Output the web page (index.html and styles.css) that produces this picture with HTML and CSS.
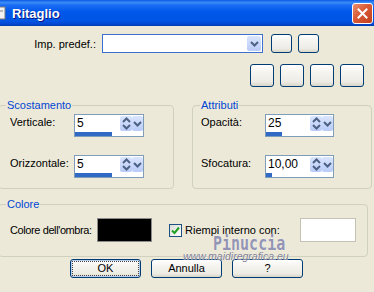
FILE: index.html
```html
<!DOCTYPE html>
<html lang="it">
<head>
<meta charset="utf-8">
<title>Ritaglio</title>
<link rel="stylesheet" href="styles.css">
</head>
<body>
<div class="window">
  <div class="titlebar">
    <svg class="appicon" width="7" height="14" viewBox="0 0 7 14"><rect x="-6" y="1" width="11" height="12" fill="#f2f2f2" stroke="#7a7a7a"/><rect x="-4" y="4" width="7" height="2" fill="#b8b8b8"/></svg>
    <span class="title">Ritaglio</span>
    <span class="close"><svg width="11" height="11" viewBox="0 0 11 11"><path d="M1.5 1.5 L9.5 9.5 M9.5 1.5 L1.5 9.5" stroke="#fff" stroke-width="2" stroke-linecap="square"/></svg></span>
  </div>
  <div class="body">
    <div class="preset-row">
      <span class="preset-label">Imp. predef.:</span>
      <div class="combo"><span class="combo-btn"><svg width="9" height="6" viewBox="0 0 9 6"><path d="M1 1 L4.5 4.5 L8 1" fill="none" stroke="#4d6185" stroke-width="2"/></svg></span></div>
      <button class="xbtn small"></button>
      <button class="xbtn small"></button>
    </div>
    <div class="tool-row">
      <button class="xbtn tool"></button>
      <button class="xbtn tool"></button>
      <button class="xbtn tool"></button>
      <button class="xbtn tool"></button>
    </div>
    <div class="groups">
      <fieldset class="group g-offset">
        <legend>Scostamento</legend>
        <div class="field-row">
          <span class="flabel">Verticale:</span>
          <div class="spin"><div class="spin-top"><span class="val">5</span><span class="updown"><svg width="9" height="13" viewBox="0 0 9 13"><path d="M1 5 L4.5 1.5 L8 5 M1 8 L4.5 11.5 L8 8" fill="none" stroke="#4d6185" stroke-width="2"/></svg></span><span class="drop"><svg width="9" height="6" viewBox="0 0 9 6"><path d="M1 1 L4.5 4.5 L8 1" fill="none" stroke="#4d6185" stroke-width="2"/></svg></span></div><div class="bar"><div class="fill" style="width:37px"></div></div></div>
        </div>
        <div class="field-row">
          <span class="flabel">Orizzontale:</span>
          <div class="spin"><div class="spin-top"><span class="val">5</span><span class="updown"><svg width="9" height="13" viewBox="0 0 9 13"><path d="M1 5 L4.5 1.5 L8 5 M1 8 L4.5 11.5 L8 8" fill="none" stroke="#4d6185" stroke-width="2"/></svg></span><span class="drop"><svg width="9" height="6" viewBox="0 0 9 6"><path d="M1 1 L4.5 4.5 L8 1" fill="none" stroke="#4d6185" stroke-width="2"/></svg></span></div><div class="bar"><div class="fill" style="width:37px"></div></div></div>
        </div>
      </fieldset>
      <fieldset class="group g-attr">
        <legend>Attributi</legend>
        <div class="field-row">
          <span class="flabel">Opacità:</span>
          <div class="spin"><div class="spin-top"><span class="val">25</span><span class="updown"><svg width="9" height="13" viewBox="0 0 9 13"><path d="M1 5 L4.5 1.5 L8 5 M1 8 L4.5 11.5 L8 8" fill="none" stroke="#4d6185" stroke-width="2"/></svg></span><span class="drop"><svg width="9" height="6" viewBox="0 0 9 6"><path d="M1 1 L4.5 4.5 L8 1" fill="none" stroke="#4d6185" stroke-width="2"/></svg></span></div><div class="bar"><div class="fill" style="width:16px"></div></div></div>
        </div>
        <div class="field-row">
          <span class="flabel">Sfocatura:</span>
          <div class="spin"><div class="spin-top"><span class="val">10,00</span><span class="updown"><svg width="9" height="13" viewBox="0 0 9 13"><path d="M1 5 L4.5 1.5 L8 5 M1 8 L4.5 11.5 L8 8" fill="none" stroke="#4d6185" stroke-width="2"/></svg></span><span class="drop"><svg width="9" height="6" viewBox="0 0 9 6"><path d="M1 1 L4.5 4.5 L8 1" fill="none" stroke="#4d6185" stroke-width="2"/></svg></span></div><div class="bar"><div class="fill" style="width:6px"></div></div></div>
        </div>
      </fieldset>
    </div>
    <fieldset class="group g-color">
      <legend>Colore</legend>
      <div class="color-row">
        <span class="clabel">Colore dell'ombra:</span>
        <span class="swatch black"></span>
        <span class="check"><svg width="9" height="9" viewBox="0 0 9 9"><path d="M1 4.5 L3.5 7 L8 1.5" fill="none" stroke="#21a121" stroke-width="2"/></svg></span>
        <span class="checklabel">Riempi interno con:</span>
        <span class="swatch white"></span>
      </div>
    </fieldset>
    <div class="actions">
      <button class="xbtn action default"><span class="focus">OK</span></button>
      <button class="xbtn action">Annulla</button>
      <button class="xbtn action">?</button>
    </div>
  </div>
  <div class="wm-name">Pinuccia</div>
  <div class="wm-url">www.maidiregrafica.eu</div>
</div>
</body>
</html>
```
FILE: styles.css
```css
html, body {
  margin: 0;
  padding: 0;
}
body {
  width: 374px;
  height: 292px;
  overflow: hidden;
  background: #ece9d8;
  font-family: "Liberation Sans", Arial, sans-serif;
  font-size: 11px;
  color: #000;
}
.window {
  position: relative;
  width: 374px;
  height: 292px;
  overflow: hidden;
  background: #ece9d8;
}
.titlebar {
  height: 26px;
  display: flex;
  align-items: center;
  background: linear-gradient(to bottom, #0a5ae6 0%, #3a8cf8 10%, #1a6cf4 20%, #0058ea 45%, #0055e4 80%, #0048d2 92%, #003bb0 100%);
}
.appicon {
  display: block;
  margin-left: 0;
}
.title {
  margin-left: 5px;
  color: #fff;
  font-weight: bold;
  font-size: 13px;
  text-shadow: 1px 1px 0 #0a1883;
}
.close {
  margin-left: auto;
  margin-right: 1px;
  width: 21px;
  height: 21px;
  box-sizing: border-box;
  border: 1px solid #fff;
  border-radius: 3px;
  background: linear-gradient(135deg, #eb8e6e 0%, #d95a35 45%, #c2401c 100%);
  display: flex;
  align-items: center;
  justify-content: center;
}
.close svg { display: block; }
.body {
  display: flex;
  flex-direction: column;
}
.preset-row {
  margin-top: 8px;
  height: 19px;
  display: flex;
  align-items: center;
}
.preset-label {
  width: 66px;
  margin-left: 30px;
  text-align: right;
  white-space: nowrap;
}
.combo {
  margin-left: 6px;
  width: 161px;
  height: 19px;
  box-sizing: border-box;
  border: 1px solid #3d6fcf;
  background: #fff;
  display: flex;
  justify-content: flex-end;
  align-items: center;
  padding-right: 1px;
}
.combo-btn {
  width: 14px;
  height: 15px;
  border-radius: 2px;
  background: linear-gradient(to bottom, #dae5fd, #b9cbf7);
  display: flex;
  align-items: center;
  justify-content: center;
}
.xbtn {
  box-sizing: border-box;
  border: 1px solid #003c74;
  border-radius: 3px;
  background: linear-gradient(to bottom, #ffffff 0%, #f6f5f1 30%, #ecebe4 80%, #d9d5c8 100%);
  padding: 0;
  margin: 0;
  font-family: "Liberation Sans", Arial, sans-serif;
  font-size: 11px;
  color: #000;
}
.small {
  width: 21px;
  height: 19px;
  margin-left: 6px;
}
.combo + .small {
  margin-left: 8px;
}
.tool-row {
  margin-top: 11px;
  display: flex;
  gap: 6px;
  padding-left: 250px;
}
.tool {
  width: 24px;
  height: 23px;
}
.groups {
  margin-top: 11px;
  display: flex;
  gap: 18px;
  margin-left: -2px;
}
.group {
  box-sizing: border-box;
  margin: 0;
  min-width: 0;
  border: 1px solid #d0d0bf;
  border-radius: 4px;
}
.group legend {
  color: #0046d5;
  line-height: 14px;
  padding: 0 1px;
}
.g-offset {
  width: 176px;
  padding: 2px 0 10px 11px;
}
.g-offset legend { margin-left: -4px; }
.g-attr {
  width: 180px;
  padding: 2px 0 10px 8px;
}
.g-attr legend { margin-left: -1px; }
.field-row {
  display: flex;
  align-items: flex-start;
}
.field-row + .field-row {
  margin-top: 18px;
}
.flabel {
  width: 64px;
  flex-shrink: 0;
  white-space: nowrap;
  line-height: 14px;
  padding-top: 1px;
}
.spin {
  width: 70px;
  height: 23px;
  box-sizing: border-box;
  border: 1px solid #7f9db9;
  background: #fff;
  display: flex;
  flex-direction: column;
}
.g-attr .spin { width: 69px; }
.spin-top {
  height: 17px;
  display: flex;
  align-items: center;
}
.val {
  flex: 1;
  padding-left: 2px;
  font-size: 12px;
  line-height: 17px;
}
.updown, .drop {
  height: 15px;
  border-radius: 2px;
  background: linear-gradient(to bottom, #dae5fd, #b9cbf7);
  display: flex;
  align-items: center;
  justify-content: center;
}
.updown { width: 12px; }
.drop { width: 11px; }
.updown svg, .drop svg, .combo-btn svg { display: block; }
.bar {
  height: 4px;
}
.fill {
  height: 4px;
  background: #316ac5;
}
.g-color {
  margin-top: 8px;
  margin-left: -2px;
  width: 370px;
  padding: 7px 11px 14px 11px;
}
.g-color legend { margin-left: -4px; }
.color-row {
  display: flex;
  align-items: center;
  height: 24px;
}
.clabel {
  width: 87px;
  flex-shrink: 0;
  white-space: nowrap;
  letter-spacing: -0.4px;
}
.swatch {
  display: block;
  flex-shrink: 0;
  box-sizing: border-box;
  height: 24px;
}
.swatch.black {
  width: 55px;
  background: #000;
  border: 1px solid #8c8c8c;
}
.swatch.white {
  width: 56px;
  margin-left: auto;
  background: #fff;
  border: 1px solid #c4c2b4;
}
.check {
  margin-left: 17px;
  flex-shrink: 0;
  width: 13px;
  height: 13px;
  box-sizing: border-box;
  border: 1px solid #1c5180;
  background: linear-gradient(135deg, #dcdcd7, #ffffff);
  display: flex;
  align-items: center;
  justify-content: center;
}
.check svg { display: block; }
.checklabel {
  margin-left: 3px;
  white-space: nowrap;
}
.actions {
  margin-top: 2px;
  display: flex;
  gap: 10px;
  padding-left: 70px;
}
.action {
  width: 71px;
  height: 19px;
  line-height: 17px;
}
.action.default {
  box-shadow: inset 0 0 0 1px #b6cdf2;
  padding: 2px;
}
.focus {
  display: block;
  height: 13px;
  line-height: 13px;
  outline: 1px dotted #444;
}
.wm-name {
  position: absolute;
  left: 213px;
  top: 234px;
  font-family: "DejaVu Sans Mono", monospace;
  font-size: 15px;
  line-height: 15px;
  font-weight: bold;
  color: #9494b4;
  transform: scaleY(1.3);
  transform-origin: 0 0;
  text-shadow: 0 0 1px #fff;
}
.wm-url {
  position: absolute;
  left: 183px;
  top: 250px;
  font-family: "Liberation Sans", Arial, sans-serif;
  font-style: italic;
  font-size: 10.5px;
  color: #7e7e92;
  text-shadow: 0 0 1px #fff;
}
```
